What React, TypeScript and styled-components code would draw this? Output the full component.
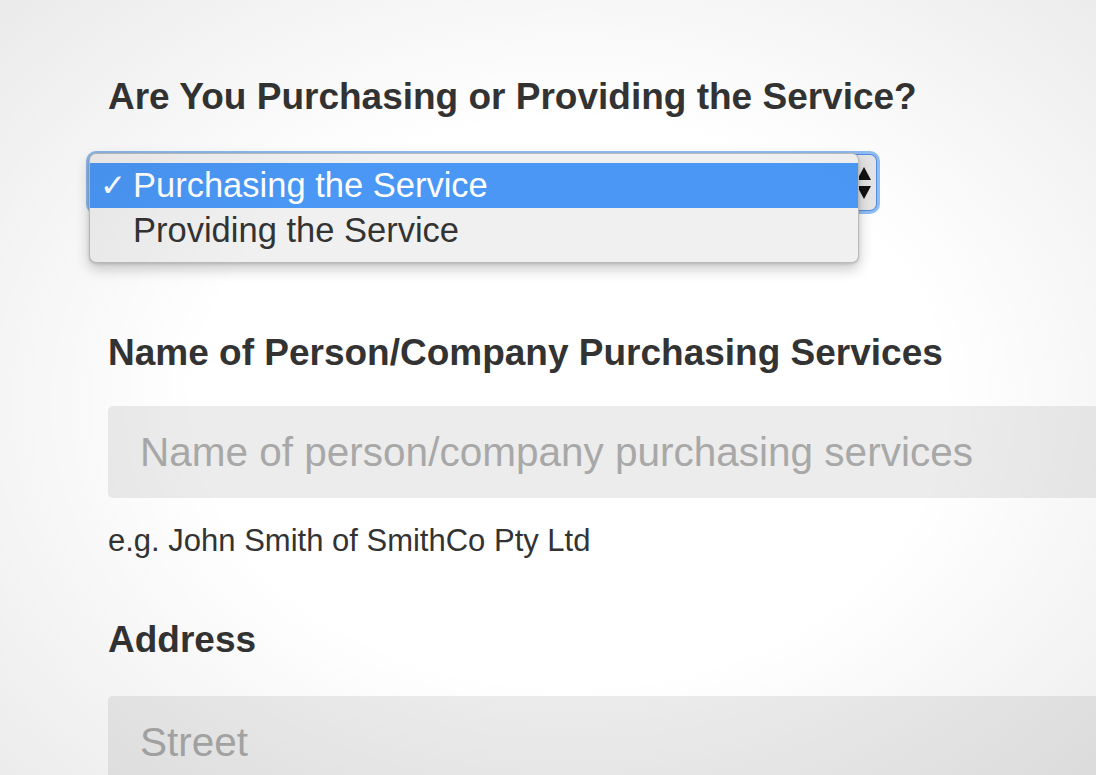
import React from "react";
import styled, { createGlobalStyle } from "styled-components";

const GlobalStyle = createGlobalStyle`
  html, body {
    margin: 0;
    padding: 0;
    background: #ffffff;
    overflow: hidden;
  }
  body {
    font-family: "Liberation Sans", Arial, Helvetica, sans-serif;
    color: #333;
  }
`;

const Page = styled.main`
  position: relative;
  width: 1096px;
  height: 775px;
  overflow: hidden;
  background: #fff;
`;

const Vignette = styled.div`
  position: absolute;
  inset: 0;
  pointer-events: none;
  background: radial-gradient(
    ellipse 75% 80% at 52% 52%,
    rgba(0, 0, 0, 0) 45%,
    rgba(0, 0, 0, 0.09) 100%
  );
`;

const Form = styled.form`
  padding: 75px 0 0 108px;
  display: flex;
  flex-direction: column;
`;

const Field = styled.div<{ $gap?: number }>`
  display: flex;
  flex-direction: column;
  margin-bottom: ${(p) => p.$gap ?? 0}px;
`;

const Label = styled.label<{ $space: number }>`
  font-size: 37px;
  font-weight: 700;
  line-height: 44px;
  color: #333;
  margin-bottom: ${(p) => p.$space}px;
`;

const SelectWrap = styled.div`
  position: relative;
  width: 786px;
  height: 55px;
  margin-left: -18px;
`;

const SelectBox = styled.div`
  height: 100%;
  border-radius: 6px;
  background: #e6e6e6;
  box-shadow: 0 0 0 1px rgba(75, 140, 230, 0.95), 0 0 0 4px rgba(100, 162, 240, 0.7);
  display: flex;
  align-items: center;
  justify-content: flex-end;
  padding-right: 4px;
  box-sizing: border-box;
`;

const Arrows = styled.svg`
  width: 16px;
  height: 38px;
`;

const Menu = styled.ul`
  position: absolute;
  left: -1px;
  top: -2px;
  width: 770px;
  margin: 0;
  padding: 9px 0;
  list-style: none;
  background: #f0f0f0;
  border: 1px solid rgba(0, 0, 0, 0.22);
  border-radius: 7px;
  box-shadow: 0 6px 14px rgba(0, 0, 0, 0.22), 0 1px 3px rgba(0, 0, 0, 0.15);
  box-sizing: border-box;
`;

const Option = styled.li<{ $selected?: boolean }>`
  height: 45px;
  display: flex;
  align-items: center;
  padding-left: 10px;
  font-size: 34.5px;
  color: ${(p) => (p.$selected ? "#fff" : "#333")};
  background: ${(p) => (p.$selected ? "#4a97f5" : "transparent")};
`;

const Check = styled.span`
  width: 33px;
  font-size: 31px;
  line-height: 1;
  font-family: "DejaVu Sans", sans-serif;
`;

const Input = styled.input`
  width: 1020px;
  height: 92px;
  border: none;
  border-radius: 5px;
  background: #ececec;
  padding: 0 32px;
  box-sizing: border-box;
  font-family: inherit;
  font-size: 40.5px;
  color: #333;
  outline: none;
  &::placeholder {
    color: #a8a8a8;
  }
`;

const Help = styled.p`
  margin: 25px 0 0;
  font-size: 31px;
  line-height: 36px;
  color: #333;
`;

export default function App() {
  return (
    <Page>
      <GlobalStyle />
      <Form onSubmit={(e) => e.preventDefault()}>
        <Field $gap={121}>
          <Label $space={36}>Are You Purchasing or Providing the Service?</Label>
          <SelectWrap>
            <SelectBox>
              <Arrows viewBox="0 0 16 38">
                <path d="M8 3 L15 16 L1 16 Z" fill="#111" />
                <path d="M1 22 L15 22 L8 35 Z" fill="#111" />
              </Arrows>
            </SelectBox>
            <Menu>
              <Option $selected>
                <Check>✓</Check>Purchasing the Service
              </Option>
              <Option>
                <Check />Providing the Service
              </Option>
            </Menu>
          </SelectWrap>
        </Field>
        <Field $gap={59}>
          <Label $space={31}>Name of Person/Company Purchasing Services</Label>
          <Input placeholder="Name of person/company purchasing services" />
          <Help>e.g. John Smith of SmithCo Pty Ltd</Help>
        </Field>
        <Field>
          <Label $space={34}>Address</Label>
          <Input placeholder="Street" />
        </Field>
      </Form>
      <Vignette />
    </Page>
  );
}
